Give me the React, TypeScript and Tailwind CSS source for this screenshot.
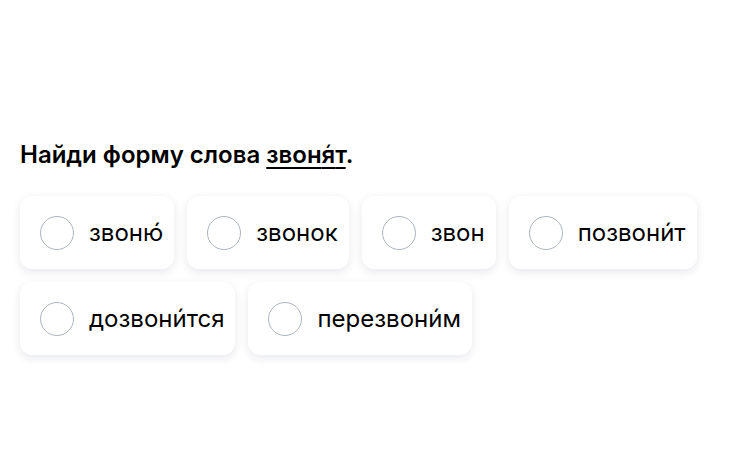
import React from 'react';

const OPTIONS = ['звоню́', 'звонок', 'звон', 'позвони́т', 'дозвони́тся', 'перезвони́м'];

function Option({ label }: { label: string }) {
  return (
    <label className="flex items-center h-[73px] pl-5 pr-[11px] rounded-xl bg-white shadow-[0_3px_10px_rgba(20,30,60,0.1)] cursor-pointer">
      <span className="w-[34px] h-[34px] rounded-full border-[1.5px] border-[#adb4c0] shrink-0" />
      <span className="ml-[15px] text-[24px] text-black leading-none">{label}</span>
    </label>
  );
}

export default function App() {
  return (
    <div className="w-[750px] h-[462px] bg-white pt-[137px] px-5" style={{ fontFamily: 'Inter, "Noto Sans", sans-serif' }}>
      <h1 className="text-[24px] font-semibold text-black leading-[36px]">
        Найди форму слова{' '}
        <span className="underline underline-offset-4 decoration-[1.5px]">
          звон<span className="relative">я<span className="absolute left-1/2 -translate-x-1/2 top-[-3px] font-normal no-underline">´</span></span>т
        </span>
        .
      </h1>
      <div className="mt-[23px] flex flex-wrap gap-[13px] w-[700px]">
        {OPTIONS.map((o) => (
          <Option key={o} label={o} />
        ))}
      </div>
    </div>
  );
}
